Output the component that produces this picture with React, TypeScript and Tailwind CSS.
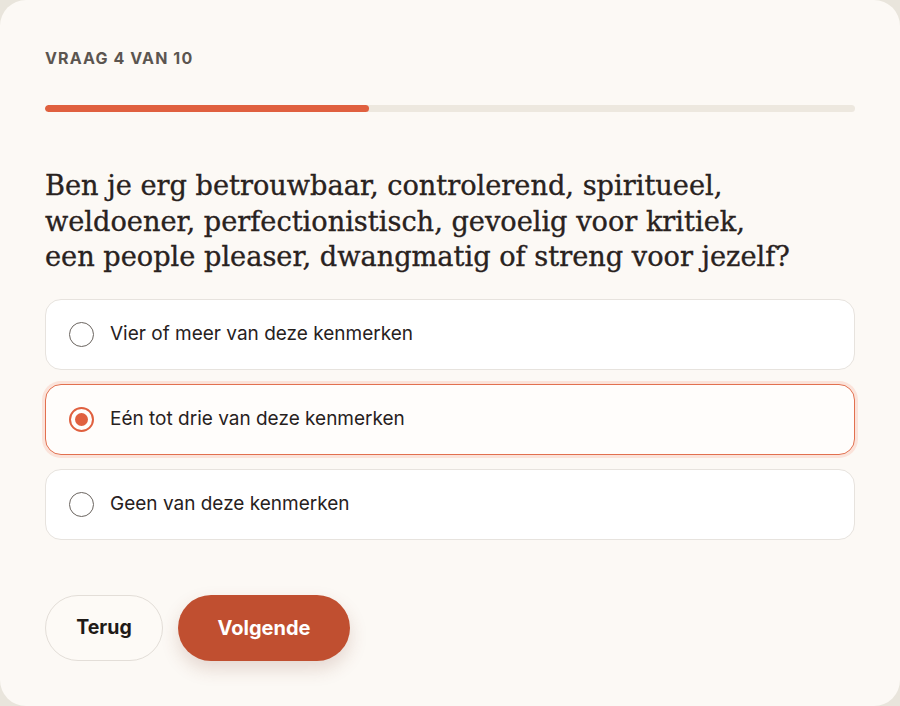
import React from "react";

const options = [
  "Vier of meer van deze kenmerken",
  "Eén tot drie van deze kenmerken",
  "Geen van deze kenmerken",
];

export default function App() {
  const selected = 1;
  return (
    <div className="w-[900px] h-[706px] bg-[#e9e5dc]">
      <div className="w-full h-full rounded-[26px] bg-[#fcf9f5] px-[45px] pt-[49px] flex flex-col font-['Inter',sans-serif]">
        <div className="text-[16px] font-bold tracking-[0.07em] text-[#5b5550] leading-[18px]">
          VRAAG 4 VAN 10
        </div>
        <div className="mt-[38px] h-[7px] w-full rounded-full bg-[#ede8df] overflow-hidden">
          <div className="h-full w-[40%] rounded-full bg-[#e0603f]" />
        </div>
        <h1 className="mt-[56px] font-['DejaVu_Serif',serif] text-[27.2px] leading-[35.5px] text-[#29221e] [-webkit-text-stroke:0.35px_#29221e]">
          Ben je erg betrouwbaar, controlerend, spiritueel,
          <br />
          weldoener, perfectionistisch, gevoelig voor kritiek,
          <br />
          een people pleaser, dwangmatig of streng voor jezelf?
        </h1>
        <div className="mt-[24px] flex flex-col gap-[14px]">
          {options.map((o, i) => {
            const sel = i === selected;
            return (
              <div
                key={o}
                className={
                  sel
                    ? "h-[71px] rounded-[16px] border border-[#e2704f] bg-[#fffdfb] shadow-[0_0_0_3px_#fbe3da] flex items-center pl-[23px]"
                    : "h-[71px] rounded-[16px] border border-[#e7e3de] bg-white flex items-center pl-[23px]"
                }
              >
                {sel ? (
                  <div className="w-[25px] h-[25px] rounded-full border-2 border-[#e0603f] flex items-center justify-center">
                    <div className="w-[13px] h-[13px] rounded-full bg-[#e0603f]" />
                  </div>
                ) : (
                  <div className="w-[25px] h-[25px] rounded-full border-[1.5px] border-[#6b6560]" />
                )}
                <span className="ml-[16px] text-[19px] text-[#27211d]">{o}</span>
              </div>
            );
          })}
        </div>
        <div className="mt-[55px] flex gap-[15px]">
          <button className="h-[66px] w-[118px] rounded-full border border-[#e3ded8] bg-[#fdfaf6] text-[19.5px] font-bold text-[#1f1a17]">
            Terug
          </button>
          <button className="h-[66px] w-[172px] rounded-full bg-[#c04f30] text-[20px] font-bold text-white shadow-[0_8px_18px_rgba(120,60,40,0.18)]">
            Volgende
          </button>
        </div>
      </div>
    </div>
  );
}
